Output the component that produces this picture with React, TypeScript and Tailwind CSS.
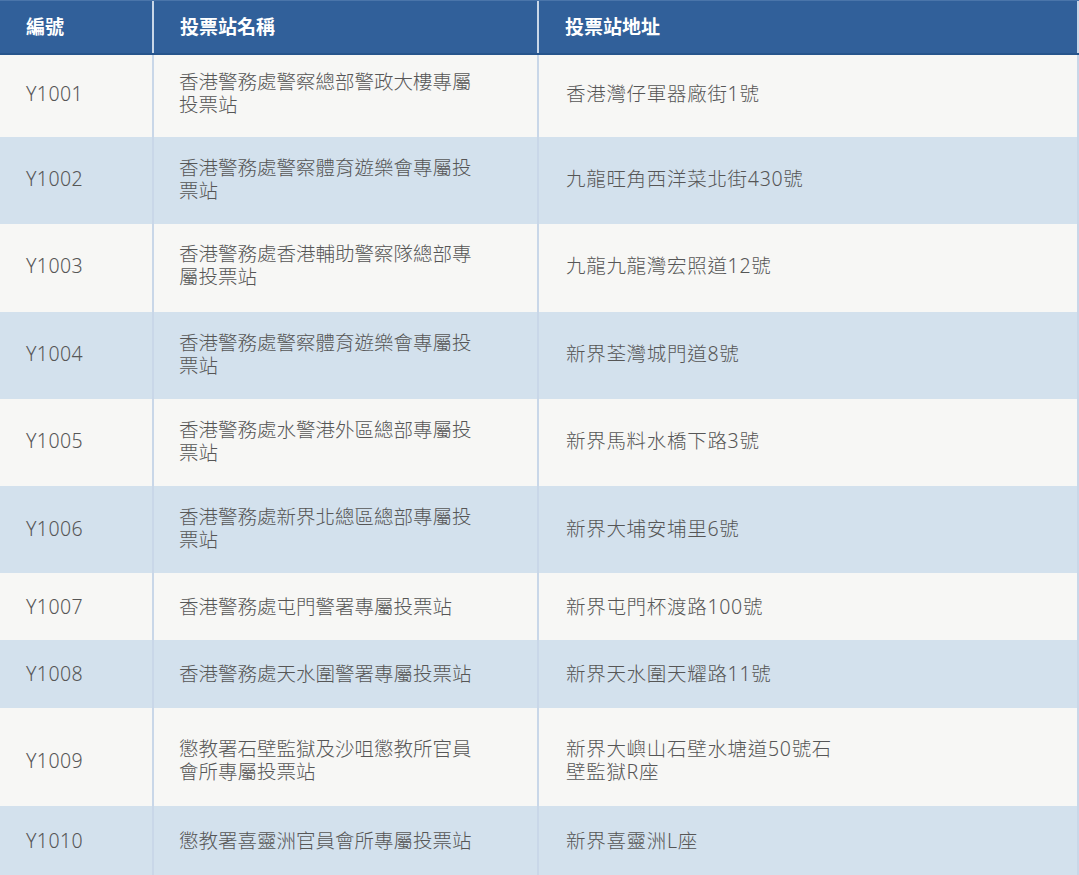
const rows = [
  { id: "Y1001", name: "香港警務處警察總部警政大樓專屬投票站", address: "香港灣仔軍器廠街1號", bg: "h-[82px] bg-[#f7f7f5]", pad: "pb-[6px]" },
  { id: "Y1002", name: "香港警務處警察體育遊樂會專屬投票站", address: "九龍旺角西洋菜北街430號", bg: "h-[87px] bg-[#d3e1ed]", pad: "pb-[4px]" },
  { id: "Y1003", name: "香港警務處香港輔助警察隊總部專屬投票站", address: "九龍九龍灣宏照道12號", bg: "h-[88px] bg-[#f7f7f5]", pad: "pb-[6px]" },
  { id: "Y1004", name: "香港警務處警察體育遊樂會專屬投票站", address: "新界荃灣城門道8號", bg: "h-[87px] bg-[#d3e1ed]", pad: "pb-[4px]" },
  { id: "Y1005", name: "香港警務處水警港外區總部專屬投票站", address: "新界馬料水橋下路3號", bg: "h-[87px] bg-[#f7f7f5]", pad: "pb-[4px]" },
  { id: "Y1006", name: "香港警務處新界北總區總部專屬投票站", address: "新界大埔安埔里6號", bg: "h-[87px] bg-[#d3e1ed]", pad: "pb-[3px]" },
  { id: "Y1007", name: "香港警務處屯門警署專屬投票站", address: "新界屯門杯渡路100號", bg: "h-[67px] bg-[#f7f7f5]", pad: "" },
  { id: "Y1008", name: "香港警務處天水圍警署專屬投票站", address: "新界天水圍天耀路11號", bg: "h-[68px] bg-[#d3e1ed]", pad: "pb-[2px]" },
  { id: "Y1009", name: "懲教署石壁監獄及沙咀懲教所官員會所專屬投票站", address: "新界大嶼山石壁水塘道50號石壁監獄R座", bg: "h-[98px] bg-[#f7f7f5]", pad: "pt-[6px]" },
  { id: "Y1010", name: "懲教署喜靈洲官員會所專屬投票站", address: "新界喜靈洲L座", bg: "h-[69px] bg-[#d3e1ed]", pad: "" },
];

const font = "font-['Noto_Sans','Noto_Sans_CJK_TC',sans-serif]";
const cell = "shrink-0 border-r-2 border-r-[#c9d7e8] flex items-center";

export default function App() {
  return (
    <div className={`w-[1079px] h-[875px] overflow-hidden bg-[#f7f7f5] ${font}`}>
      {/* Header */}
      <div className="flex h-[55px] bg-[#31609a] border-t border-t-[#4a75aa] border-b-2 border-b-[#27558c] text-white font-bold text-[19px]">
        <div className={`w-[154px] pl-[26px] ${cell}`}>編號</div>
        <div className={`w-[385px] pl-[26px] ${cell}`}>投票站名稱</div>
        <div className={`w-[540px] pl-[26px] ${cell}`}>投票站地址</div>
      </div>

      {/* Rows */}
      {rows.map((row) => (
        <div key={row.id} className={`flex ${row.bg} text-[19.5px] leading-[23px] font-light text-[#565656]`}>
          <div className={`w-[154px] pl-[26px] tracking-[0.4px] ${cell} ${row.pad}`}>{row.id}</div>
          <div className={`w-[385px] pl-[25px] ${cell} ${row.pad}`}>
            <p className="w-[300px]">{row.name}</p>
          </div>
          <div className={`w-[540px] pl-[27px] ${cell} ${row.pad}`}>
            <p className="w-[275px] tracking-[0.7px]">{row.address}</p>
          </div>
        </div>
      ))}
    </div>
  );
}
